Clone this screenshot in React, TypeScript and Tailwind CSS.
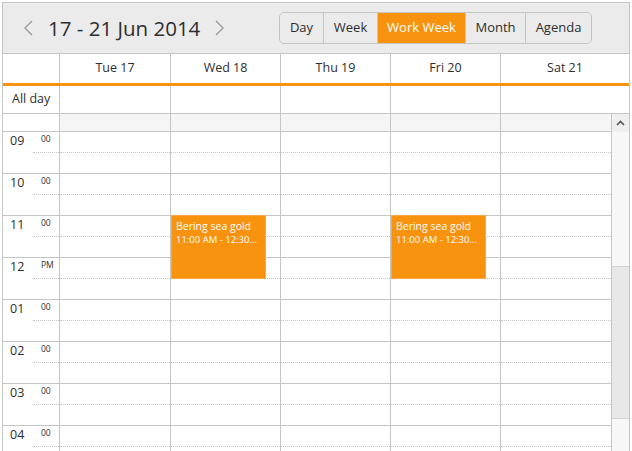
const days = ["Tue 17", "Wed 18", "Thu 19", "Fri 20", "Sat 21"];

const views = [
  { label: "Day", width: "w-[44px] border-r", active: false },
  { label: "Week", width: "w-[54px] border-r", active: false },
  { label: "Work Week", width: "w-[88px] border-r", active: true },
  { label: "Month", width: "w-[60px] border-r", active: false },
  { label: "Agenda", width: "w-[65px]", active: false },
];

const hours = [
  ["09", "00"],
  ["10", "00"],
  ["11", "00"],
  ["12", "PM"],
  ["01", "00"],
  ["02", "00"],
  ["03", "00"],
  ["04", "00"],
];

function Toolbar() {
  return (
    <div className="flex h-[51px] items-center border-b border-[#c5c5c5] bg-[#ebebeb] pl-[20px] pr-[37px]">
      <svg width="10" height="16" viewBox="0 0 10 16" className="text-[#9b9b9b]">
        <path d="M9 1 L2 8 L9 15" fill="none" stroke="currentColor" strokeWidth="1.4" />
      </svg>
      <span className="ml-[15px] text-[20.5px] leading-[26px] text-[#2e2e2e]">17 - 21 Jun 2014</span>
      <svg width="10" height="16" viewBox="0 0 10 16" className="ml-[15px] text-[#9b9b9b]">
        <path d="M1 1 L8 8 L1 15" fill="none" stroke="currentColor" strokeWidth="1.4" />
      </svg>
      <div className="ml-auto flex h-[32px] overflow-hidden rounded-[5px] border border-[#c5c5c5] bg-[#ebebeb]">
        {views.map((v) => (
          <div
            key={v.label}
            className={`flex items-center justify-center border-[#c5c5c5] text-[13px] ${v.width} ${
              v.active ? "bg-[#f7930e] text-white" : "text-[#2e2e2e]"
            }`}
          >
            {v.label}
          </div>
        ))}
      </div>
    </div>
  );
}

function Header() {
  return (
    <div className="grid h-[32px] grid-cols-[57px_111px_110px_110px_110px_1fr] border-b-[3px] border-[#f7930e]">
      <div className="border-r border-[#c5c5c5]" />
      {days.map((d, i) => (
        <div
          key={d}
          className={`flex items-center justify-center text-[12.5px] ${i < 4 ? "border-r border-[#c5c5c5]" : ""}`}
        >
          {d}
        </div>
      ))}
    </div>
  );
}

function AllDay() {
  return (
    <div className="grid h-[28px] grid-cols-[57px_111px_110px_110px_110px_1fr] border-b border-[#c5c5c5]">
      <div className="flex items-center border-r border-[#c5c5c5] pl-[9px] text-[12.5px]">All day</div>
      {days.map((d, i) => (
        <div key={d} className={i < 4 ? "border-r border-[#c5c5c5]" : ""} />
      ))}
    </div>
  );
}

function Event({ left }: { left: string }) {
  return (
    <div
      className={`absolute top-[101px] h-[64px] w-[95px] border border-[#f9a73e] bg-[#f7930e] px-[4px] pt-[3px] text-white ${left}`}
    >
      <div className="whitespace-nowrap text-[10.5px] leading-[14px]">Bering sea gold</div>
      <div className="whitespace-nowrap text-[9.5px] leading-[13px]">11:00 AM - 12:30...</div>
    </div>
  );
}

function Body() {
  return (
    <div className="relative flex h-[337px] overflow-hidden">
      <div className="w-[609px]">
        <div className="grid h-[18px] grid-cols-[57px_111px_110px_110px_110px_111px] border-b border-[#c5c5c5]">
          <div className="border-r border-[#c5c5c5]" />
          {days.map((d) => (
            <div key={d} className="border-r border-[#c5c5c5] bg-[#f5f5f5]" />
          ))}
        </div>
        {hours.map(([h, m]) => (
          <div
            key={h}
            className="grid h-[42px] grid-cols-[57px_111px_110px_110px_110px_111px] border-b border-[#c5c5c5]"
          >
            <div className="flex border-r border-[#c5c5c5]">
              <div className="w-[30px] pl-[7px] pt-[1px] text-[12.5px] leading-[16px]">{h}</div>
              <div className="h-[21px] flex-1 border-b border-dotted border-[#c5c5c5] pl-[8px] pt-[2px] text-[8.5px] leading-[10px]">
                {m}
              </div>
            </div>
            {days.map((d) => (
              <div key={d} className="border-r border-[#c5c5c5]">
                <div className="h-[21px] border-b border-dotted border-[#c5c5c5]" />
              </div>
            ))}
          </div>
        ))}
      </div>
      <div className="flex w-[17px] flex-col bg-[#f7f7f7]">
        <div className="flex h-[18px] items-center justify-center bg-[#efefef]">
          <svg width="9" height="6" viewBox="0 0 9 6">
            <path d="M1 5 L4.5 1.5 L8 5" fill="none" stroke="#555" strokeWidth="1.6" />
          </svg>
        </div>
        <div className="pt-[134px]">
          <div className="h-[153px] border-y border-[#d2d2d2] bg-[#e8e8e8]" />
        </div>
      </div>
      <Event left="left-[168px]" />
      <Event left="left-[388px]" />
    </div>
  );
}

export default function App() {
  return (
    <div className="h-[451px] w-[632px] overflow-hidden bg-white pl-[2px] pt-[2px] font-['Open_Sans',sans-serif] text-[#2e2e2e]">
      <div className="w-[628px] border border-[#c5c5c5]">
        <Toolbar />
        <Header />
        <AllDay />
        <Body />
      </div>
    </div>
  );
}
